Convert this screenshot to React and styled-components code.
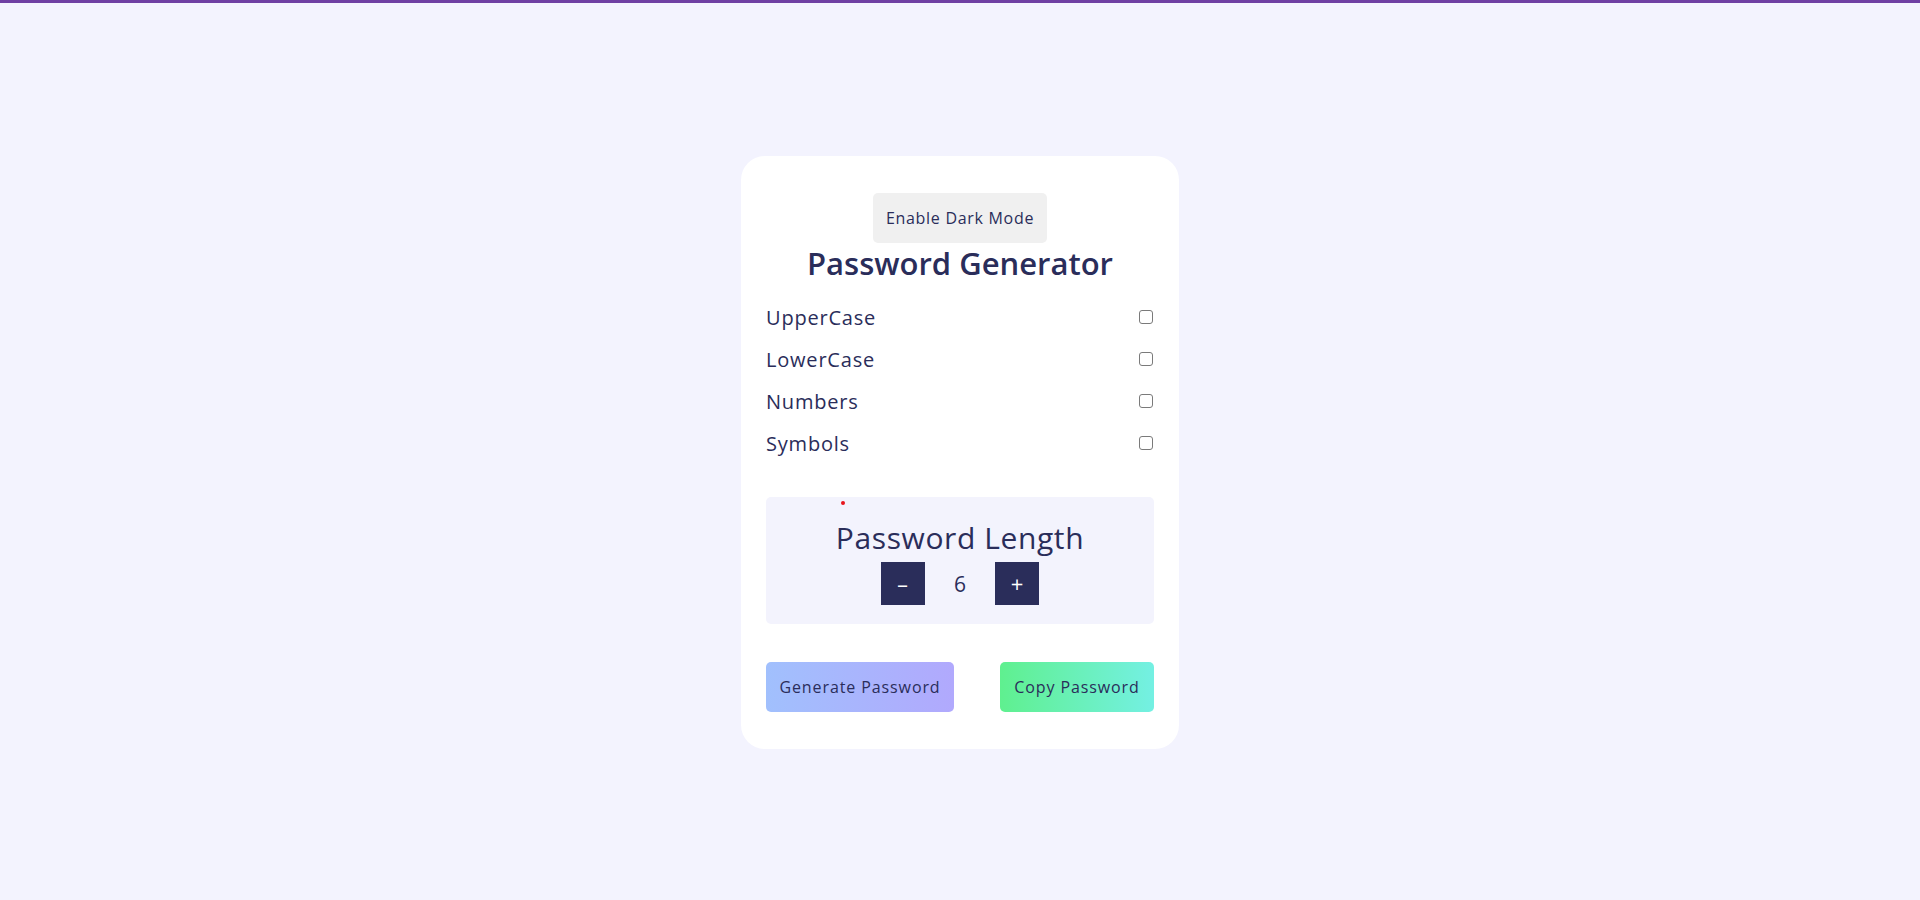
import styled, { createGlobalStyle } from "styled-components";

const GlobalStyle = createGlobalStyle`
    html, body {
        margin: 0;
        padding: 0;
        background: #f3f3fe;
    }
    body {
        border-top: 3px solid #6f3fa3;
        font-family: "Open Sans", "Liberation Sans", sans-serif;
        color: #2a2d5a;
    }
`;

const Page = styled.div`
    min-height: 897px;
    display: flex;
    justify-content: center;
    align-items: flex-start;
    padding-top: 153px;
    box-sizing: border-box;
`;

const Card = styled.div`
    width: 438px;
    box-sizing: border-box;
    background: #ffffff;
    border-radius: 24px;
    padding: 37px 25px;
    display: flex;
    flex-direction: column;
    align-items: center;
`;

const ModeButton = styled.button`
    width: 174px;
    height: 50px;
    border: none;
    border-radius: 5px;
    background: #f0f0f0;
    color: #2a2d5a;
    font-family: inherit;
    font-size: 16px;
    letter-spacing: 0.7px;
    padding: 0;
    cursor: pointer;
`;

const Title = styled.h1`
    margin: 0;
    font-size: 31px;
    font-weight: 600;
    line-height: 40px;
    color: #2a2d5a;
`;

const Options = styled.div`
    width: 100%;
    margin-top: 13px;
    display: flex;
    flex-direction: column;
`;

const Row = styled.label`
    height: 42px;
    display: flex;
    align-items: center;
    justify-content: space-between;
    font-size: 20px;
    letter-spacing: 0.8px;
    color: #2a2d5a;
`;

const Check = styled.input`
    appearance: none;
    width: 14px;
    height: 14px;
    margin: 0 1px 0 0;
    border: 1.5px solid #7a7a7a;
    border-radius: 3px;
    background: #fff;
    box-sizing: border-box;
`;

const LengthBox = styled.div`
    position: relative;
    width: 100%;
    box-sizing: border-box;
    margin-top: 33px;
    padding: 21px 0 19px;
    background: #f3f3fd;
    border-radius: 5px;
    display: flex;
    flex-direction: column;
    align-items: center;
`;

const Dot = styled.span`
    position: absolute;
    left: 75px;
    top: 4px;
    width: 4px;
    height: 4px;
    border-radius: 50%;
    background: #e8141b;
`;

const LengthTitle = styled.h2`
    margin: 0;
    font-size: 30px;
    font-weight: 500;
    letter-spacing: 0.6px;
    line-height: 40px;
    color: #2a2d5a;
`;

const Counter = styled.div`
    margin-top: 4px;
    display: flex;
    align-items: center;
`;

const StepButton = styled.button`
    width: 44px;
    height: 43px;
    border: none;
    background: #2a2d5a;
    color: #ffffff;
    font-family: inherit;
    font-size: 22px;
    font-weight: 500;
    line-height: 43px;
    padding: 0;
    cursor: pointer;
`;

const Glyph = styled.span`
    display: inline-block;
    transform: scaleX(${(p) => p.$stretch || 1});
`;

const Value = styled.span`
    width: 70px;
    text-align: center;
    font-size: 21px;
    color: #2a2d5a;
`;

const Actions = styled.div`
    width: 100%;
    margin-top: 38px;
    display: flex;
    justify-content: space-between;
`;

const ActionButton = styled.button`
    width: ${(p) => p.$width}px;
    height: 50px;
    border: none;
    border-radius: 5px;
    background: ${(p) => p.$bg};
    color: #2a2d5a;
    font-family: inherit;
    font-size: 16px;
    letter-spacing: 0.9px;
    padding: 0;
    cursor: pointer;
`;

const options = ["UpperCase", "LowerCase", "Numbers", "Symbols"];

const App = () => {
    return (
        <>
            <GlobalStyle />
            <Page>
                <Card>
                    <ModeButton>Enable Dark Mode</ModeButton>
                    <Title>Password Generator</Title>
                    <Options>
                        {options.map((name) => (
                            <Row key={name}>
                                {name}
                                <Check type="checkbox" />
                            </Row>
                        ))}
                    </Options>
                    <LengthBox>
                        <Dot />
                        <LengthTitle>Password Length</LengthTitle>
                        <Counter>
                            <StepButton>
                                <Glyph $stretch={1.7}>-</Glyph>
                            </StepButton>
                            <Value>6</Value>
                            <StepButton>+</StepButton>
                        </Counter>
                    </LengthBox>
                    <Actions>
                        <ActionButton $width={188} $bg="linear-gradient(90deg, #a1c0fd, #b1a9fd)">
                            Generate Password
                        </ActionButton>
                        <ActionButton $width={154} $bg="linear-gradient(90deg, #5ff08f, #74f0e3)">
                            Copy Password
                        </ActionButton>
                    </Actions>
                </Card>
            </Page>
        </>
    );
};

export default App;
